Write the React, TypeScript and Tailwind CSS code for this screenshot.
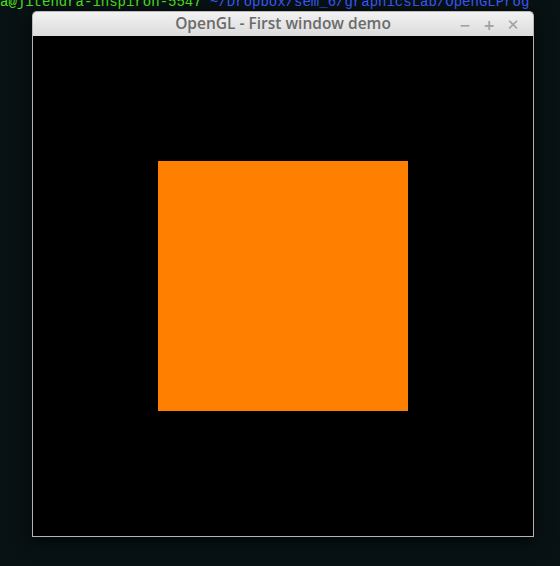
export default function App() {
  return (
    <div className="relative h-[566px] w-[560px] overflow-hidden bg-[#081113]">
      {/* terminal prompt behind the window */}
      <div className="-mt-[6px] whitespace-nowrap font-['Liberation_Mono',monospace] text-[14px] leading-[16px]">
        <span className="text-[#4ee01f]">a@jitendra-inspiron-5547</span>
        <span className="text-[#3b5bff]"> ~/Dropbox/sem_6/graphicsLab/OpenGLProg</span>
      </div>

      {/* window */}
      <div className="absolute left-[32px] top-[11px] w-[502px] shadow-[0_4px_16px_rgba(0,0,0,0.6)]">
        <div className="relative flex h-[25px] items-center justify-center rounded-t-[5px] border border-b-0 border-[#b8b8b8] bg-gradient-to-b from-[#f2f2f2] to-[#dcdcdc]">
          <span className="font-['Open_Sans',sans-serif] text-[15.5px] font-semibold text-[#6b6b6b]">
            OpenGL - First window demo
          </span>
          <div className="absolute right-[12px] top-[1px] flex h-full items-center gap-[8px] font-['DejaVu_Sans',sans-serif] text-[14px] font-bold text-[#a0a0a0]">
            <span className="w-[16px] text-center">−</span>
            <span className="w-[16px] text-center">+</span>
            <span className="w-[16px] text-center text-[15px]">✕</span>
          </div>
        </div>
        <div className="flex h-[501px] items-center justify-center border border-t-0 border-[#b4b4b4] bg-black">
          <div className="h-[250px] w-[250px] bg-[#ff8000]" />
        </div>
      </div>
    </div>
  );
}
